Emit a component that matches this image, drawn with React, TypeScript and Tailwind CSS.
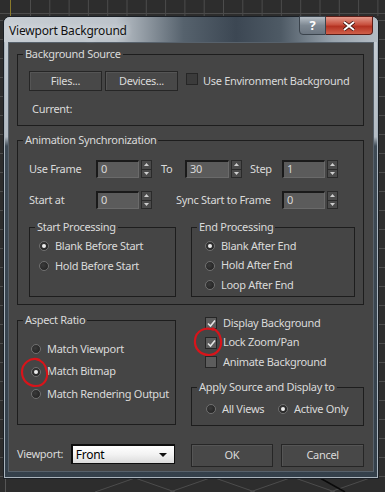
import React from 'react'

const Radio: React.FC<{ on?: boolean }> = ({ on }) => (
  <span className="relative inline-block w-[10px] h-[10px] shrink-0 rounded-full border border-[#707070] bg-[radial-gradient(circle_at_40%_40%,#3a3a3a,#1e1e1e)]">
    {on && <span className="absolute left-[2px] top-[2px] w-[4px] h-[4px] rounded-full bg-[#ececec]" />}
  </span>
)

const Check: React.FC<{ on?: boolean; dark?: boolean }> = ({ on, dark }) => (
  <span
    className={`relative inline-block w-[12px] h-[12px] shrink-0 border border-[#262626] ${
      dark ? 'bg-[#3b3b3b]' : 'bg-[#5c5c5c]'
    }`}
  >
    {on && (
      <svg className="absolute left-[1px] top-[1px]" width="9" height="9" viewBox="0 0 9 9">
        <path d="M1 4.5 L3.5 7 L8 1.5" fill="none" stroke="#e4e4e4" strokeWidth="1.6" />
      </svg>
    )}
  </span>
)

const Spinner: React.FC = () => (
  <span className="ml-[2px] flex flex-col w-[11px] h-[18px] border border-[#2a2a2a] bg-[#4b4b4b]">
    <span className="flex-1 flex items-center justify-center border-b border-[#2a2a2a]">
      <svg width="5" height="3" viewBox="0 0 5 3">
        <path d="M0 3 L2.5 0 L5 3 Z" fill="#cfcfcf" />
      </svg>
    </span>
    <span className="flex-1 flex items-center justify-center">
      <svg width="5" height="3" viewBox="0 0 5 3">
        <path d="M0 0 L2.5 3 L5 0 Z" fill="#cfcfcf" />
      </svg>
    </span>
  </span>
)

const Field: React.FC<{ value: string; w: string }> = ({ value, w }) => (
  <span
    className={`${w} h-[18px] pl-[3px] leading-[14px] text-[#d8d8d8] bg-[#5b5b5b] border-t-2 border-l-2 border-t-[#1a1a1a] border-l-[#1a1a1a] border-b border-r border-b-[#6a6a6a] border-r-[#6a6a6a]`}
  >
    {value}
  </span>
)

const Group: React.FC<{ label: string; className?: string; children?: React.ReactNode }> = ({
  label,
  className,
  children,
}) => (
  <div className={`relative border border-[#1d1d1d] ${className ?? ''}`}>
    <span className="absolute -top-[8px] left-[5px] px-[2px] bg-[#454545] leading-[14px] whitespace-nowrap">
      {label}
    </span>
    {children}
  </div>
)

const Btn: React.FC<{ label: string; className?: string }> = ({ label, className }) => (
  <div
    className={`flex items-center justify-center bg-[#484848] border border-[#262626] shadow-[inset_1px_1px_0_#555] ${className ?? ''}`}
  >
    {label}
  </div>
)

export default function App() {
  return (
    <div className="relative w-[385px] h-[492px] overflow-hidden bg-[#2d2d2d] font-['Noto_Sans',sans-serif] text-[11px] tracking-[-0.3px] text-[#dadada]">
      {/* viewport grid behind the dialog */}
      <svg className="absolute inset-0" width="385" height="492">
        <g stroke="#4c4c4c" strokeWidth="1">
          <line x1="0" y1="13.5" x2="385" y2="13.5" />
          {Array.from({ length: 21 }).map((_, i) => (
            <line key={i} x1={30.5 + i * 19.3} y1="0" x2={30.5 + i * 19.3} y2="16" />
          ))}
          {Array.from({ length: 26 }).map((_, i) => (
            <line key={'r' + i} x1="378" y1={20.5 + i * 19} x2="385" y2={20.5 + i * 19} />
          ))}
          {Array.from({ length: 26 }).map((_, i) => (
            <line key={'l' + i} x1="0" y1={20.5 + i * 19} x2="3" y2={20.5 + i * 19} />
          ))}
          <line x1="95" y1="492" x2="135" y2="478" />
          <line x1="135" y1="478" x2="175" y2="492" />
          <line x1="170" y1="492" x2="210" y2="478" />
          <line x1="215" y1="478" x2="255" y2="492" />
          <line x1="250" y1="492" x2="290" y2="478" />
          <line x1="295" y1="478" x2="335" y2="492" />
          <line x1="330" y1="492" x2="370" y2="478" />
        </g>
        <line x1="10.5" y1="0" x2="10.5" y2="16" stroke="#8a7a2a" />
        <line x1="5.5" y1="478" x2="5.5" y2="492" stroke="#555" />
        <line x1="320" y1="478" x2="345" y2="492" stroke="#0a0a0a" strokeWidth="1.5" />
      </svg>

      {/* dialog window */}
      <div className="relative ml-[3px] mt-[16px] w-[376px] h-[463px] rounded-t-[7px] border border-[#1a1f25] bg-[linear-gradient(180deg,#c9d0d6_0%,#b3bbc3_26%,#3e4a55_28%,#34404b_100%)] shadow-[inset_0_0_0_1px_#a9b3bc]">
        {/* title bar */}
        <div className="flex justify-between h-[25px] rounded-t-[6px] bg-[linear-gradient(90deg,#c8ced4_0%,#bcc3ca_30%,#56626d_48%,#3c4753_62%,#4e5a65_74%,#98a3ad_88%,#b4bcc4_100%)]">
          <span className="pl-[5px] pt-[5px] text-[12px] tracking-[-0.2px] leading-[17px] text-[#111] [text-shadow:0_0_6px_#eef2f6]">
            Viewport Background
          </span>
          <div className="flex mr-[5px] -mt-[1px] h-[19px]">
            <div className="w-[27px] flex items-center justify-center rounded-bl-[4px] border border-[#3a434c] bg-[linear-gradient(180deg,#b6bec6,#7d8791_50%,#6b7580)] text-white font-bold text-[13px] leading-none">
              ?
            </div>
            <div className="w-[47px] flex items-center justify-center rounded-br-[4px] border border-l-0 border-[#5a1c16] bg-[linear-gradient(180deg,#e49a8c,#c8503e_45%,#b43222_55%,#d0604a)]">
              <svg width="12" height="10" viewBox="0 0 12 10">
                <path d="M1 1 L11 9 M11 1 L1 9" stroke="#3a0e0a" strokeWidth="3.4" />
                <path d="M1 1 L11 9 M11 1 L1 9" stroke="#fff" strokeWidth="2" />
              </svg>
            </div>
          </div>
        </div>

        {/* client area */}
        <div className="mx-[4px] h-[430px] bg-[#454545] border border-[#57616b] flex flex-col pl-[8px] pr-[9px] pt-[11px]">
          <Group label="Background Source" className="h-[72px] pl-[11px] pt-[16px]">
            <div className="flex items-center h-[20px]">
              <Btn label="Files..." className="w-[73px] h-[20px]" />
              <Btn label="Devices..." className="ml-[3px] w-[73px] h-[20px]" />
              <span className="ml-[8px]">
                <Check dark />
              </span>
              <span className="ml-[5px] whitespace-nowrap">Use Environment Background</span>
            </div>
            <div className="mt-[11px] ml-[3px] leading-[14px]">Current:</div>
          </Group>

          <Group label="Animation Synchronization" className="mt-[14px] h-[165px] pl-[11px] pt-[19px]">
            <div className="flex items-center h-[18px]">
              <span className="w-[67px]">Use Frame</span>
              <Field value="0" w="w-[43px]" />
              <Spinner />
              <span className="ml-[9px] w-[24px]">To</span>
              <Field value="30" w="w-[44px]" />
              <Spinner />
              <span className="ml-[8px] w-[32px]">Step</span>
              <Field value="1" w="w-[43px]" />
              <Spinner />
            </div>
            <div className="flex items-center h-[18px] mt-[13px]">
              <span className="w-[67px]">Start at</span>
              <Field value="0" w="w-[43px]" />
              <Spinner />
              <span className="ml-[24px] w-[106px] whitespace-nowrap">Sync Start to Frame</span>
              <Field value="0" w="w-[43px]" />
              <Spinner />
            </div>
            <div className="flex mt-[18px]">
              <Group label="Start Processing" className="w-[147px] h-[70px] pl-[9px] pt-[8px]">
                <div className="flex items-center h-[20px] gap-[6px]">
                  <Radio on />
                  <span>Blank Before Start</span>
                </div>
                <div className="flex items-center h-[20px] gap-[6px]">
                  <Radio />
                  <span>Hold Before Start</span>
                </div>
              </Group>
              <Group label="End Processing" className="ml-[15px] w-[164px] h-[70px] pl-[13px] pt-[8px]">
                <div className="flex items-center h-[20px] gap-[6px]">
                  <Radio on />
                  <span>Blank After End</span>
                </div>
                <div className="flex items-center h-[19px] gap-[6px]">
                  <Radio />
                  <span>Hold After End</span>
                </div>
                <div className="flex items-center h-[20px] gap-[6px]">
                  <Radio />
                  <span>Loop After End</span>
                </div>
              </Group>
            </div>
          </Group>

          <div className="flex mt-[8px]">
            <Group label="Aspect Ratio" className="mt-[7px] w-[159px] h-[105px] pl-[13px] pt-[17px]">
              <div className="flex items-center h-[22px] gap-[6px]">
                <Radio />
                <span>Match Viewport</span>
              </div>
              <div className="flex items-center h-[23px] gap-[6px]">
                <Radio on />
                <span>Match Bitmap</span>
              </div>
              <div className="flex items-center h-[22px] gap-[6px]">
                <Radio />
                <span className="whitespace-nowrap">Match Rendering Output</span>
              </div>
            </Group>
            <div className="ml-[15px] w-[173px] flex flex-col">
              <div className="pl-[14px]">
                <div className="flex items-center h-[20px] gap-[6px]">
                  <Check on />
                  <span>Display Background</span>
                </div>
                <div className="flex items-center h-[19px] gap-[6px]">
                  <Check on />
                  <span>Lock Zoom/Pan</span>
                </div>
                <div className="flex items-center h-[20px] gap-[6px]">
                  <Check />
                  <span>Animate Background</span>
                </div>
              </div>
              <Group label="Apply Source and Display to" className="mt-[15px] h-[39px] pl-[14px] pt-[11px]">
                <div className="flex items-center h-[20px]">
                  <Radio />
                  <span className="ml-[6px] w-[56px]">All Views</span>
                  <Radio on />
                  <span className="ml-[6px]">Active Only</span>
                </div>
              </Group>
            </div>
          </div>

          <div className="flex items-start mt-[18px]">
            <span className="w-[54px] h-[20px] leading-[20px]">Viewport:</span>
            <div className="relative w-[104px] h-[20px] flex items-center pl-[3px] border-t-2 border-l-2 border-[#0e0e0e] border-b border-r bg-[linear-gradient(180deg,#ffffff,#f2f2f2_50%,#dcdcdc)] text-[12px] text-black">
              Front
              <svg className="absolute right-[7px] top-[7px]" width="8" height="4" viewBox="0 0 8 4">
                <path d="M0 0 L8 0 L4 4 Z" fill="#111" />
              </svg>
            </div>
            <Btn label="OK" className="ml-[16px] w-[83px] h-[23px]" />
            <Btn label="Cancel" className="ml-[8px] w-[83px] h-[23px]" />
          </div>
        </div>
      </div>

      {/* red annotation marks */}
      <svg className="absolute inset-0 pointer-events-none" width="385" height="492">
        <path
          d="M40 360 C30 356 22 364 22 372 C22 381 29 386 36 386 C44 386 48 379 47 372 C46 365 42 360 35 359"
          fill="none"
          stroke="#d8141a"
          strokeWidth="2.2"
        />
        <path
          d="M214 330 C205 326 196 331 195 340 C194 349 201 355 209 355 C217 355 222 348 221 340 C220 334 217 330 212 328"
          fill="none"
          stroke="#d8141a"
          strokeWidth="2.2"
        />
      </svg>
    </div>
  )
}
